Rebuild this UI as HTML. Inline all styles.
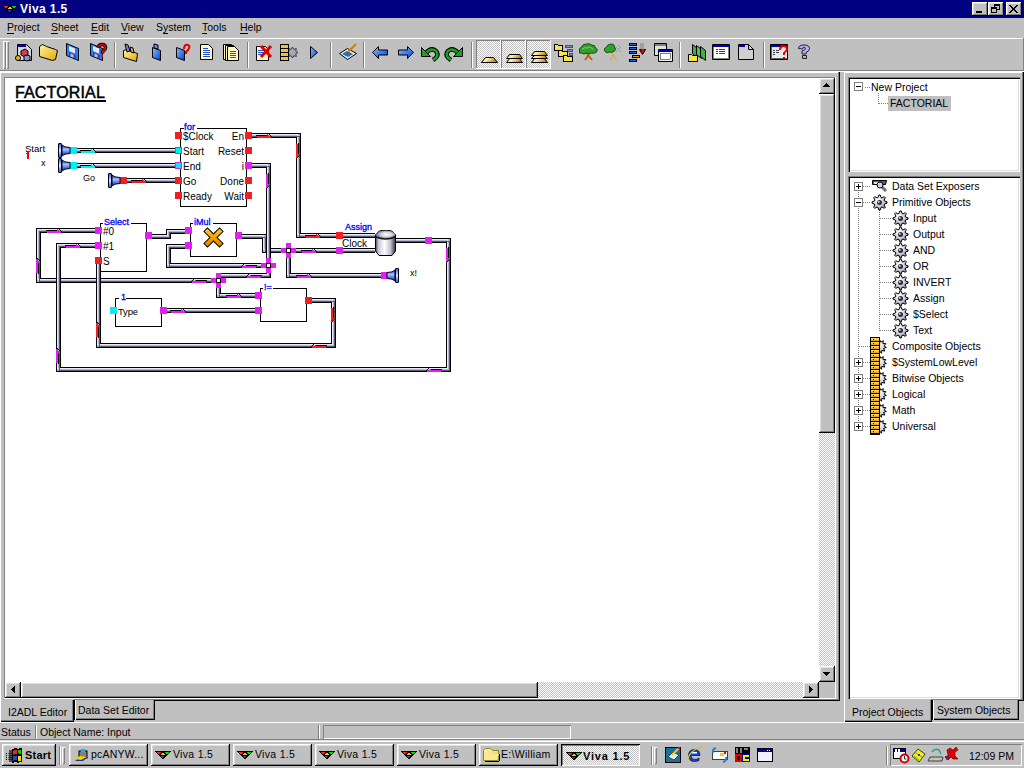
<!DOCTYPE html>
<html><head><meta charset="utf-8">
<style>
*{margin:0;padding:0;box-sizing:border-box}
html,body{width:1024px;height:768px;overflow:hidden;background:#c0c0c0;font-family:"Liberation Sans",sans-serif;font-size:10.5px;color:#000}
.a{position:absolute}
.t{position:absolute;white-space:pre;line-height:1}
.btn{position:absolute;background:#c0c0c0;box-shadow:inset -1px -1px #000,inset 1px 1px #fff,inset -2px -2px #808080,inset 2px 2px #dfdfdf}
.sunk{position:absolute;box-shadow:inset 1px 1px #808080,inset -1px -1px #fff}
.dith{background-color:#fff;background-image:linear-gradient(45deg,#c0c0c0 25%,transparent 25%,transparent 75%,#c0c0c0 75%),linear-gradient(45deg,#c0c0c0 25%,transparent 25%,transparent 75%,#c0c0c0 75%);background-size:2px 2px;background-position:0 0,1px 1px}
u{text-decoration:none;border-bottom:1px solid #000}
</style></head><body>

<!-- TITLE BAR -->
<div class="a" style="left:0;top:0;width:1024px;height:18px;background:#000080"></div>
<svg class="a" style="left:0;top:0" width="20" height="16" shape-rendering="crispEdges">
<path d="M2 5h16v1h-1v1h-1v1h-1v1h-1v1h-1v1h-1v1h-1v1h-2v-1h-1v-1h-1v-1h-1v-1h-1v-1h-1v-1h-1v-1h-1z" fill="#000"/>
<path d="M4 6h4v1h-1v1h-2v-1h-1z" fill="#ff2020"/>
<path d="M12 6h4v1h-1v1h-2v-1h-1z" fill="#00e000"/>
<path d="M9 7h2v1h1v1h-4v-1h1z" fill="#f8c800"/>
<path d="M8 10h3v1h-1v1h-1v-1h-1z" fill="#2040ff"/>
</svg>
<div class="t" style="left:20px;top:3px;font-size:12px;font-weight:bold;color:#fff;letter-spacing:0.4px">Viva 1.5</div>
<div class="btn" style="left:972px;top:2px;width:16px;height:14px"></div>
<div class="a" style="left:976px;top:11px;width:6px;height:2px;background:#000"></div>
<div class="btn" style="left:988px;top:2px;width:16px;height:14px"></div>
<svg class="a" style="left:991px;top:4px" width="9" height="9" shape-rendering="crispEdges">
<rect x="3" y="0" width="6" height="2" fill="#000"/><rect x="8" y="0" width="1" height="6" fill="#000"/><rect x="3" y="0" width="1" height="3" fill="#000"/><rect x="6" y="5" width="3" height="1" fill="#000"/>
<rect x="0" y="3" width="6" height="2" fill="#000"/><rect x="0" y="3" width="1" height="6" fill="#000"/><rect x="5" y="3" width="1" height="6" fill="#000"/><rect x="0" y="8" width="6" height="1" fill="#000"/>
</svg>
<div class="btn" style="left:1006px;top:2px;width:16px;height:14px"></div>
<svg class="a" style="left:1009px;top:5px" width="9" height="8" shape-rendering="crispEdges">
<path d="M0 0h2v1h-2zM7 0h2v1h-2z M1 1h2v1h-2z M6 1h2v1h-2z M2 2h2v1h-2z M5 2h2v1h-2z M3 3h3v1h-3z M3 4h3v1h-3z M2 5h2v1h-2z M5 5h2v1h-2z M1 6h2v1h-2z M6 6h2v1h-2z M0 7h2v1h-2z M7 7h2v1h-2z" fill="#000"/>
</svg>

<!-- MENU -->
<div class="t" style="left:7px;top:22px"><u>P</u>roject</div>
<div class="t" style="left:51px;top:22px"><u>S</u>heet</div>
<div class="t" style="left:91px;top:22px"><u>E</u>dit</div>
<div class="t" style="left:121px;top:22px"><u>V</u>iew</div>
<div class="t" style="left:156px;top:22px">S<u>y</u>stem</div>
<div class="t" style="left:202px;top:22px"><u>T</u>ools</div>
<div class="t" style="left:240px;top:22px"><u>H</u>elp</div>

<!-- TOOLBAR frame -->
<div class="a" style="left:0;top:38px;width:1024px;height:1px;background:#fff"></div>
<div class="a" style="left:1023px;top:38px;width:1px;height:32px;background:#808080"></div>
<div class="a" style="left:0;top:70px;width:1024px;height:1px;background:#808080"></div>
<div class="a" style="left:0;top:71px;width:1024px;height:1px;background:#fff"></div>
<div class="a" style="left:3px;top:41px;width:3px;height:28px;box-shadow:inset 1px 1px #fff,inset -1px -1px #808080"></div>
<div class="a" style="left:6px;top:41px;width:3px;height:28px;box-shadow:inset 1px 1px #fff,inset -1px -1px #808080"></div>
<svg class="a" style="left:0;top:38px" width="830" height="33" viewBox="0 38 830 33">
<defs>
<pattern id="dp" width="2" height="2" patternUnits="userSpaceOnUse"><rect width="2" height="2" fill="#fff"/><rect width="1" height="1" fill="#c0c0c0"/><rect x="1" y="1" width="1" height="1" fill="#c0c0c0"/></pattern>
<linearGradient id="gy" x1="0" y1="0" x2="1" y2="1"><stop offset="0" stop-color="#fff6a0"/><stop offset="1" stop-color="#e0a800"/></linearGradient>
<linearGradient id="gb" x1="0" y1="0" x2="1" y2="1"><stop offset="0" stop-color="#8ec0ff"/><stop offset="1" stop-color="#0040d0"/></linearGradient>
<linearGradient id="gg" x1="0" y1="0" x2="1" y2="1"><stop offset="0" stop-color="#60e060"/><stop offset="1" stop-color="#007000"/></linearGradient>
</defs>
<g shape-rendering="crispEdges">
<!-- separators -->
<rect x="114" y="42" width="1" height="26" fill="#808080"/><rect x="115" y="42" width="1" height="26" fill="#fff"/>
<rect x="247" y="42" width="1" height="26" fill="#808080"/><rect x="248" y="42" width="1" height="26" fill="#fff"/>
<rect x="330" y="42" width="1" height="26" fill="#808080"/><rect x="331" y="42" width="1" height="26" fill="#fff"/>
<rect x="363" y="42" width="1" height="26" fill="#808080"/><rect x="364" y="42" width="1" height="26" fill="#fff"/>
<rect x="471" y="42" width="1" height="26" fill="#808080"/><rect x="472" y="42" width="1" height="26" fill="#fff"/>
<rect x="679" y="42" width="1" height="26" fill="#808080"/><rect x="680" y="42" width="1" height="26" fill="#fff"/>
<rect x="763" y="42" width="1" height="26" fill="#808080"/><rect x="764" y="42" width="1" height="26" fill="#fff"/>
<!-- pressed buttons -->
<rect x="476" y="40" width="24" height="28" fill="url(#dp)"/><rect x="476" y="40" width="24" height="1" fill="#808080"/><rect x="476" y="40" width="1" height="28" fill="#808080"/><rect x="476" y="68" width="24" height="1" fill="#fff"/><rect x="500" y="40" width="1" height="29" fill="#fff"/>
<rect x="501" y="40" width="24" height="28" fill="url(#dp)"/><rect x="501" y="40" width="24" height="1" fill="#808080"/><rect x="501" y="40" width="1" height="28" fill="#808080"/><rect x="501" y="68" width="24" height="1" fill="#fff"/><rect x="525" y="40" width="1" height="29" fill="#fff"/>
<rect x="526" y="40" width="24" height="28" fill="url(#dp)"/><rect x="526" y="40" width="24" height="1" fill="#808080"/><rect x="526" y="40" width="1" height="28" fill="#808080"/><rect x="526" y="68" width="24" height="1" fill="#fff"/><rect x="550" y="40" width="1" height="29" fill="#fff"/>
</g>
<g stroke="#000" stroke-width="1" stroke-linejoin="round">
<!-- 1 new project -->
<path d="M17.5 44.5h9l5 5v11h-14z" fill="#d8d8d8"/><rect x="18" y="45" width="8" height="2" fill="#0000c0" stroke="none"/>
<path d="M21 51l4-2 3 2v4l-3 2-4-2z" fill="#d04050"/>
<circle cx="18" cy="58" r="2.5" fill="#f0c000"/><path d="M24 56l3-1 3 1v4l-3 1-3-1z" fill="#9090e0"/>
<!-- 2 folder -->
<path d="M39.5 46.5l3-2 4 2 9 3 2 1-2 9-3 1-13-4z" fill="url(#gy)"/>
<!-- 3 floppy -->
<path d="M66.5 43.5l12 5v12l-12-5z" fill="#2080ff" stroke="#000"/><path d="M69 46l6 2.5v5l-6-2.5z" fill="#e8e8f0" stroke="none"/><path d="M69 52l7 3v4l-7-3z" fill="#4040b0" stroke="none"/><path d="M70.5 53.5l3 1.2v3l-3-1.2z" fill="#c0c0d0" stroke="none"/>
<!-- 4 floppy ? -->
<path d="M90.5 43.5l12 5v12l-12-5z" fill="#2080ff" stroke="#000"/><path d="M93 46l6 2.5v5l-6-2.5z" fill="#e8e8f0" stroke="none"/><path d="M93 52l7 3v4l-7-3z" fill="#4040b0" stroke="none"/><path d="M94.5 53.5l3 1.2v3l-3-1.2z" fill="#c0c0d0" stroke="none"/><path d="M98.5 47.5q0-3 3.5-3q3.5 0 3.5 3q0 2-3 4v2" fill="none" stroke="#000" stroke-width="3.5"/><path d="M98.5 47.5q0-3 3.5-3q3.5 0 3.5 3q0 2-3 4v2" fill="none" stroke="#f00000" stroke-width="1.6"/><rect x="101" y="55" width="2" height="2" fill="#f00000" stroke="none"/>
<!-- 5 open folder -->
<path d="M123.5 50.5l3-1 11 4-1 8-13-4z" fill="url(#gy)"/><path d="M125 44l3 1 2 6-3 1z" fill="#8080e0"/><path d="M130 47l3 1 1 5-3-1z" fill="#d0b080"/>
<!-- 6 small floppy -->
<path d="M152.5 47.5l8 3v10l-8-3z" fill="url(#gb)"/><path d="M154 44l4 1v4l-4-1z" fill="#8080e0"/>
<!-- 7 small floppy ? -->
<path d="M176.5 47.5l8 3v10l-8-3z" fill="url(#gb)"/><path d="M184 49q0-5 4-4q3 1 0 5l-2 2v2" fill="none" stroke="#e00000" stroke-width="2"/>
<!-- 8 doc -->
<path d="M200.5 44.5h8l4 4v11h-12z" fill="#fff8c0"/><g stroke="#2050d0" stroke-width="1" shape-rendering="crispEdges"><path d="M203 48h5M203 50h7M203 52h7M203 54h7M203 56h7"/></g>
<!-- 9 docs -->
<path d="M223.5 44.5h8l4 4v11h-12z" fill="#fff8c0"/><path d="M225.5 45.5h8l4 4v11h-12z" fill="#fff8c0"/><path d="M227.5 46.5h7l4 4v10h-11z" fill="#fff8c0"/><g stroke="#2050d0" stroke-width="1" shape-rendering="crispEdges"><path d="M230 51h6M230 53h6M230 55h6M230 57h6"/></g>
<!-- 10 doc + X -->
<path d="M256.5 46.5h9l3 3v11h-12z" fill="#fff8c0"/><g stroke="#2050d0" shape-rendering="crispEdges"><path d="M258 50h6M258 52h6M258 54h6"/></g>
<path d="M261 46l10 11M271 46l-10 11" stroke="#e00000" stroke-width="3"/>
<!-- 11 stack gear -->
<polygon points="298.0,52.5 295.7,53.8 296.4,56.4 293.8,55.7 292.5,58.0 291.2,55.7 288.6,56.4 289.3,53.8 287.0,52.5 289.3,51.2 288.6,48.6 291.2,49.3 292.5,47.0 293.8,49.3 296.4,48.6 295.7,51.2" fill="#a8a8b8" stroke="#404040"/>
<g shape-rendering="crispEdges"><rect x="280.5" y="44.5" width="8" height="16" fill="#f0c040" stroke="#000"/><path d="M281 48.5h7M281 52.5h7M281 56.5h7" stroke="#000"/></g>
<!-- 12 play -->
<path d="M310.5 46.5l7 6-7 6z" fill="url(#gb)"/>
<!-- 13 eraser -->
<path d="M339.5 53.5l8-5 9 5-9 6z" fill="#e8e8e8"/><path d="M342 54l5-3 6 3-5 3z" fill="#2070c0" stroke="none"/><path d="M348 52l8-8" stroke="#d08000" stroke-width="2"/>
<!-- 14 left arrow -->
<path d="M372.5 52.5l6-6v3.5h9v5h-9v3.5z" fill="url(#gb)"/>
<!-- 15 right arrow -->
<path d="M413.5 52.5l-6-6v3.5h-9v5h9v3.5z" fill="url(#gb)"/>
<!-- 16 undo -->
<path d="M425.5 53.5Q431 47 436 51Q440 56 433 60" fill="none" stroke="#000" stroke-width="4.5"/>
<path d="M425.5 53.5Q431 47 436 51Q440 56 433 60" fill="none" stroke="#20a020" stroke-width="2.5"/>
<path d="M421.5 47.5v9h9z" fill="#20a020" stroke="#000"/>
<!-- 17 redo -->
<path d="M458.5 53.5Q453 47 448 51Q444 56 451 60" fill="none" stroke="#000" stroke-width="4.5"/>
<path d="M458.5 53.5Q453 47 448 51Q444 56 451 60" fill="none" stroke="#20a020" stroke-width="2.5"/>
<path d="M462.5 47.5v9h-9z" fill="#20a020" stroke="#000"/>
<!-- 18-20 layers -->
<defs><linearGradient id="lay" x1="0" y1="0" x2="1" y2="0.3"><stop offset="0" stop-color="#d8a020"/><stop offset="0.4" stop-color="#fff0c0"/><stop offset="1" stop-color="#c08000"/></linearGradient></defs>
<path d="M485.5 57.5h8l4 5h-16z" fill="url(#lay)" stroke="#000"/><path d="M509.5 58.5h10l3 4h-16z" fill="url(#lay)" stroke="#000"/><path d="M509.5 54.5h10l3 4h-16z" fill="url(#lay)" stroke="#000"/><path d="M534.5 58.5h10l3 4h-16z" fill="url(#lay)" stroke="#000"/><path d="M534.5 55.5h10l3 3h-16z" fill="url(#lay)" stroke="#000"/><path d="M534.5 51.5h10l3 4h-16z" fill="url(#lay)" stroke="#000"/>
<!-- 21 folder tree -->
<g shape-rendering="crispEdges">
<path d="M565.5 45.5h7v2h-7zM567.5 49.5h5v2h-5zM569.5 53.5h3v2h-3z" fill="#8090c0" stroke="#405080"/>
<path d="M554.5 44.5h3l1 1h4v5h-8z" fill="#f8e050" stroke="#000"/>
<path d="M558.5 50.5h3l1 1h5v5h-9z" fill="#f8e050" stroke="#000"/>
<path d="M563.5 55.5h3l1 1h5v5h-9z" fill="#f8e050" stroke="#000"/>
</g>
<!-- 22 tree -->
<path d="M587 52l1 4-3 4M588 55l4 5M586 52l-4-2M589 52l4-2" stroke="#c06000" stroke-width="2" fill="none" stroke-linejoin="miter"/>
<path d="M579.5 51q-1-3 2-4q1-3 5-3q3-1 5 1q4 0 4 3q3 1 1 4q-2 2-5 1q-2 2-5 0q-3 2-5 0q-3 1-2-2z" fill="#30a030" stroke="#105010"/>
<path d="M582 49q3-2 6-1M588 47q3 0 5 2" stroke="#80d060" stroke-width="1" fill="none"/>
<!-- 23 faded tree -->
<path d="M612 52l1 4-3 4M613 55l4 5M611 52l-4-2" stroke="#e0a040" stroke-width="2" fill="none" stroke-dasharray="1 1"/>
<path d="M604.5 51q-1-3 2-4q1-3 5-3q3 0 3 3q2 2 0 4q-2 2-5 1q-3 2-5-1z" fill="#30a030" stroke="#105010"/>
<path d="M616 47l5 5M621 47l-5 5M618 45l2 2" stroke="#50b050" stroke-width="1" stroke-dasharray="1 1" fill="none"/>
<!-- 24 list arrow -->
<g stroke="#000" shape-rendering="crispEdges"><rect x="629.5" y="43.5" width="7" height="2" fill="#2060e0" stroke="#000"/><rect x="629.5" y="47.5" width="7" height="2" fill="#2060e0" stroke="#000"/><rect x="629.5" y="51.5" width="7" height="2" fill="#2060e0" stroke="#000"/><rect x="632.5" y="55.5" width="7" height="2" fill="#e0a000" stroke="#000"/><rect x="629.5" y="59.5" width="7" height="2" fill="#2060e0" stroke="#000"/></g>
<rect x="640" y="43" width="4" height="6" fill="#a0a0a0" stroke="none"/><path d="M639.5 49.5h6l-3 5z" fill="#e00000" stroke="#000"/><rect x="641" y="49" width="3" height="2" fill="#e00000" stroke="none"/>
<!-- 25 windows -->
<rect x="654.5" y="43.5" width="12" height="12" fill="#e0e0e0" stroke="#000"/><rect x="655" y="44" width="11" height="2" fill="#808080" stroke="none"/>
<rect x="658.5" y="49.5" width="14" height="12" fill="#f0f0f0" stroke="#000"/><rect x="659" y="50" width="13" height="2" fill="#0000c0" stroke="none"/><rect x="660" y="53" width="10" height="6" fill="#fff" stroke="#808080" shape-rendering="crispEdges"/>
<!-- 26 green folders -->
<path d="M692.5 44.5l5 4v9l-5-4z" fill="#40b040" stroke="#000"/><path d="M696.5 45.5l5 4v9l-5-4z" fill="#50c050" stroke="#000"/><path d="M700.5 46.5l5 4v10l-5-4z" fill="#40b040" stroke="#000"/>
<path d="M688.5 54.5h3l1 1h5v6h-9z" fill="#f8e050" stroke="#000"/>
<!-- 27 window list -->
<rect x="712.5" y="44.5" width="17" height="15" fill="#fff" stroke="#000"/><rect x="713" y="45" width="16" height="2" fill="#0000c0" stroke="none"/><rect x="713" y="47" width="1" height="12" fill="#808080" stroke="none"/><rect x="728" y="47" width="1" height="12" fill="#808080" stroke="none"/><rect x="713" y="58" width="16" height="1" fill="#808080" stroke="none"/>
<g shape-rendering="crispEdges" fill="#404040" stroke="none"><rect x="716" y="49" width="2" height="1" stroke="none"/><rect x="716" y="51" width="2" height="1" stroke="none"/><rect x="716" y="53" width="2" height="1" stroke="none"/><rect x="719" y="49" width="6" height="1" stroke="none"/><rect x="719" y="51" width="6" height="1" stroke="none"/><rect x="719" y="53" width="6" height="1" stroke="none"/></g>
<!-- 28 page -->
<path d="M738.5 44.5h10l5 5v10h-15z" fill="#d0d0d0" stroke="#000"/><rect x="739" y="45" width="6" height="2" fill="#0000c0" stroke="none"/><path d="M748.5 44.5v5h5" fill="none" stroke="#000"/>
<!-- 29 window ? -->
<rect x="770.5" y="44.5" width="17" height="15" fill="#e8e8e8" stroke="#000"/><rect x="771" y="45" width="16" height="2" fill="#0000c0" stroke="none"/><rect x="771" y="47" width="1" height="12" fill="#606060" stroke="none"/><rect x="771" y="58" width="16" height="1" fill="#606060" stroke="none"/>
<g shape-rendering="crispEdges" fill="#404040" stroke="none"><rect x="773" y="50" width="2" height="1" stroke="none"/><rect x="773" y="52" width="2" height="1" stroke="none"/><rect x="773" y="54" width="2" height="1" stroke="none"/><rect x="776" y="50" width="3" height="1" stroke="none"/><rect x="776" y="52" width="3" height="1" stroke="none"/></g>
<path d="M780 50q0-4 3.5-4q3.5 0 3.5 3q0 2-3 4v2" fill="none" stroke="#e00000" stroke-width="2"/><rect x="783" y="57" width="2" height="2" fill="#e00000" stroke="none"/>
<!-- 30 ? purple -->
<path d="M798.5 48.5q0-3.5 5.5-3.5q5.5 0 5.5 3.5q0 2.5-3.5 4v1.5h-4v-3q3.5-1 3.5-2.5q0-1-1.5-1q-1.5 0-1.5 1.5z" fill="#c0a8ff" stroke="#202020"/><rect x="802.5" y="55.5" width="4" height="3" fill="#c0a8ff" stroke="#202020"/>
</g>
</svg>


<!-- CANVAS PANEL -->
<div class="a" style="left:0;top:72px;width:839px;height:1px;background:#fff"></div>
<div class="a" style="left:4px;top:77px;width:832px;height:1px;background:#808080"></div>
<div class="a" style="left:4px;top:77px;width:1px;height:622px;background:#808080"></div>
<div class="a" style="left:5px;top:78px;width:814px;height:604px;background:#fff"></div>
<!--SCHEM--><svg class="a" style="left:5px;top:78px" width="815" height="604" viewBox="5 78 815 604"><g fill="none" stroke-linejoin="miter" stroke-linecap="butt" shape-rendering="crispEdges"><path d="M77,150.5 L175,150.5" stroke="#000" stroke-width="5"/><path d="M77,150.5 L175,150.5" stroke="#b4b4d4" stroke-width="3"/><path d="M77,149.5 L175,149.5" stroke="#e8e8ff" stroke-width="1"/><path d="M77,151.5 L175,151.5" stroke="#5a5868" stroke-width="1"/><path d="M77,165.5 L175,165.5" stroke="#000" stroke-width="5"/><path d="M77,165.5 L175,165.5" stroke="#b4b4d4" stroke-width="3"/><path d="M77,164.5 L175,164.5" stroke="#e8e8ff" stroke-width="1"/><path d="M77,166.5 L175,166.5" stroke="#5a5868" stroke-width="1"/><path d="M127,180.5 L175,180.5" stroke="#000" stroke-width="5"/><path d="M127,180.5 L175,180.5" stroke="#b4b4d4" stroke-width="3"/><path d="M127,179.5 L175,179.5" stroke="#e8e8ff" stroke-width="1"/><path d="M127,181.5 L175,181.5" stroke="#5a5868" stroke-width="1"/><path d="M252,135.5 L298.5,135.5 L298.5,235.5 L375,235.5" stroke="#000" stroke-width="5"/><path d="M252,135.5 L298.5,135.5 L298.5,235.5 L375,235.5" stroke="#b4b4d4" stroke-width="3"/><path d="M252,134.5 L297.5,134.5 L297.5,234.5 L375,234.5" stroke="#e8e8ff" stroke-width="1"/><path d="M252,136.5 L299.5,136.5 L299.5,236.5 L375,236.5" stroke="#5a5868" stroke-width="1"/><path d="M241,236.5 L264.5,236.5 L264.5,250.5 L281,250.5" stroke="#000" stroke-width="5"/><path d="M241,236.5 L264.5,236.5 L264.5,250.5 L281,250.5" stroke="#b4b4d4" stroke-width="3"/><path d="M241,235.5 L263.5,235.5 L263.5,249.5 L281,249.5" stroke="#e8e8ff" stroke-width="1"/><path d="M241,237.5 L265.5,237.5 L265.5,251.5 L281,251.5" stroke="#5a5868" stroke-width="1"/><path d="M252,165.5 L268.5,165.5 L268.5,275.5 L221,275.5" stroke="#000" stroke-width="5"/><path d="M252,165.5 L268.5,165.5 L268.5,275.5 L221,275.5" stroke="#b4b4d4" stroke-width="3"/><path d="M252,164.5 L267.5,164.5 L267.5,274.5 L221,274.5" stroke="#e8e8ff" stroke-width="1"/><path d="M252,166.5 L269.5,166.5 L269.5,276.5 L221,276.5" stroke="#5a5868" stroke-width="1"/><path d="M152,236.5 L168.5,236.5 L168.5,231.5 L186,231.5" stroke="#000" stroke-width="5"/><path d="M152,236.5 L168.5,236.5 L168.5,231.5 L186,231.5" stroke="#b4b4d4" stroke-width="3"/><path d="M152,235.5 L167.5,235.5 L167.5,230.5 L186,230.5" stroke="#e8e8ff" stroke-width="1"/><path d="M152,237.5 L169.5,237.5 L169.5,232.5 L186,232.5" stroke="#5a5868" stroke-width="1"/><path d="M186,246.5 L168.5,246.5 L168.5,265.5 L261,265.5" stroke="#000" stroke-width="5"/><path d="M186,246.5 L168.5,246.5 L168.5,265.5 L261,265.5" stroke="#b4b4d4" stroke-width="3"/><path d="M186,245.5 L167.5,245.5 L167.5,264.5 L261,264.5" stroke="#e8e8ff" stroke-width="1"/><path d="M186,247.5 L169.5,247.5 L169.5,266.5 L261,266.5" stroke="#5a5868" stroke-width="1"/><path d="M95,230.5 L38.5,230.5 L38.5,280.5 L211,280.5" stroke="#000" stroke-width="5"/><path d="M95,230.5 L38.5,230.5 L38.5,280.5 L211,280.5" stroke="#b4b4d4" stroke-width="3"/><path d="M95,229.5 L37.5,229.5 L37.5,279.5 L211,279.5" stroke="#e8e8ff" stroke-width="1"/><path d="M95,231.5 L39.5,231.5 L39.5,281.5 L211,281.5" stroke="#5a5868" stroke-width="1"/><path d="M95,245.5 L58.5,245.5 L58.5,369.5 L448.5,369.5 L448.5,240.5 L395,240.5" stroke="#000" stroke-width="5"/><path d="M95,245.5 L58.5,245.5 L58.5,369.5 L448.5,369.5 L448.5,240.5 L395,240.5" stroke="#b4b4d4" stroke-width="3"/><path d="M95,244.5 L57.5,244.5 L57.5,368.5 L447.5,368.5 L447.5,239.5 L395,239.5" stroke="#e8e8ff" stroke-width="1"/><path d="M95,246.5 L59.5,246.5 L59.5,370.5 L449.5,370.5 L449.5,241.5 L395,241.5" stroke="#5a5868" stroke-width="1"/><path d="M98.5,264 L98.5,345.5 L333.5,345.5 L333.5,300.5 L311,300.5" stroke="#000" stroke-width="5"/><path d="M98.5,264 L98.5,345.5 L333.5,345.5 L333.5,300.5 L311,300.5" stroke="#b4b4d4" stroke-width="3"/><path d="M97.5,264 L97.5,344.5 L332.5,344.5 L332.5,299.5 L311,299.5" stroke="#e8e8ff" stroke-width="1"/><path d="M99.5,264 L99.5,346.5 L334.5,346.5 L334.5,301.5 L311,301.5" stroke="#5a5868" stroke-width="1"/><path d="M166,310.5 L255,310.5" stroke="#000" stroke-width="5"/><path d="M166,310.5 L255,310.5" stroke="#b4b4d4" stroke-width="3"/><path d="M166,309.5 L255,309.5" stroke="#e8e8ff" stroke-width="1"/><path d="M166,311.5 L255,311.5" stroke="#5a5868" stroke-width="1"/><path d="M218.5,288 L218.5,295.5 L255,295.5" stroke="#000" stroke-width="5"/><path d="M218.5,288 L218.5,295.5 L255,295.5" stroke="#b4b4d4" stroke-width="3"/><path d="M217.5,288 L217.5,294.5 L255,294.5" stroke="#e8e8ff" stroke-width="1"/><path d="M219.5,288 L219.5,296.5 L255,296.5" stroke="#5a5868" stroke-width="1"/><path d="M296,250.5 L375,250.5" stroke="#000" stroke-width="5"/><path d="M296,250.5 L375,250.5" stroke="#b4b4d4" stroke-width="3"/><path d="M296,249.5 L375,249.5" stroke="#e8e8ff" stroke-width="1"/><path d="M296,251.5 L375,251.5" stroke="#5a5868" stroke-width="1"/><path d="M288.5,258 L288.5,275.5 L381,275.5" stroke="#000" stroke-width="5"/><path d="M288.5,258 L288.5,275.5 L381,275.5" stroke="#b4b4d4" stroke-width="3"/><path d="M287.5,258 L287.5,274.5 L381,274.5" stroke="#e8e8ff" stroke-width="1"/><path d="M289.5,258 L289.5,276.5 L381,276.5" stroke="#5a5868" stroke-width="1"/></g><g shape-rendering="crispEdges"><rect x="80" y="150" width="11" height="1" fill="#000"/><rect x="81" y="151" width="14" height="2" fill="#00f0f0"/><polygon points="91,149 95,153 91,153" fill="#00f0f0"/><path d="M92,148 L96,152" stroke="#000" stroke-width="1" fill="none"/><rect x="80" y="165" width="11" height="1" fill="#000"/><rect x="81" y="166" width="14" height="2" fill="#00f0f0"/><polygon points="91,164 95,168 91,168" fill="#00f0f0"/><path d="M92,163 L96,167" stroke="#000" stroke-width="1" fill="none"/><rect x="131" y="180" width="11" height="1" fill="#000"/><rect x="132" y="181" width="14" height="2" fill="#f02020"/><polygon points="142,179 146,183 142,183" fill="#f02020"/><path d="M143,178 L147,182" stroke="#000" stroke-width="1" fill="none"/><rect x="256" y="135" width="11" height="1" fill="#000"/><rect x="257" y="136" width="14" height="2" fill="#f02020"/><polygon points="267,134 271,138 267,138" fill="#f02020"/><path d="M268,133 L272,137" stroke="#000" stroke-width="1" fill="none"/><rect x="46" y="230" width="11" height="1" fill="#000"/><rect x="47" y="231" width="14" height="2" fill="#e020f0"/><polygon points="57,229 61,233 57,233" fill="#e020f0"/><path d="M58,228 L62,232" stroke="#000" stroke-width="1" fill="none"/><rect x="65" y="245" width="11" height="1" fill="#000"/><rect x="66" y="246" width="14" height="2" fill="#e020f0"/><polygon points="76,244 80,248 76,248" fill="#e020f0"/><path d="M77,243 L81,247" stroke="#000" stroke-width="1" fill="none"/><rect x="246" y="265" width="11" height="1" fill="#000"/><rect x="242" y="266" width="14" height="2" fill="#e020f0"/><polygon points="246,264 242,268 246,268" fill="#e020f0"/><path d="M245,263 L241,267" stroke="#000" stroke-width="1" fill="none"/><rect x="196" y="280" width="11" height="1" fill="#000"/><rect x="192" y="281" width="14" height="2" fill="#e020f0"/><polygon points="196,279 192,283 196,283" fill="#e020f0"/><path d="M195,278 L191,282" stroke="#000" stroke-width="1" fill="none"/><rect x="251" y="275" width="11" height="1" fill="#000"/><rect x="247" y="276" width="14" height="2" fill="#e020f0"/><polygon points="251,274 247,278 251,278" fill="#e020f0"/><path d="M250,273 L246,277" stroke="#000" stroke-width="1" fill="none"/><rect x="226" y="295" width="11" height="1" fill="#000"/><rect x="227" y="296" width="14" height="2" fill="#e020f0"/><polygon points="237,294 241,298 237,298" fill="#e020f0"/><path d="M238,293 L242,297" stroke="#000" stroke-width="1" fill="none"/><rect x="170" y="310" width="11" height="1" fill="#000"/><rect x="171" y="311" width="14" height="2" fill="#e020f0"/><polygon points="181,309 185,313 181,313" fill="#e020f0"/><path d="M182,308 L186,312" stroke="#000" stroke-width="1" fill="none"/><rect x="316" y="345" width="11" height="1" fill="#000"/><rect x="312" y="346" width="14" height="2" fill="#f02020"/><polygon points="316,344 312,348 316,348" fill="#f02020"/><path d="M315,343 L311,347" stroke="#000" stroke-width="1" fill="none"/><rect x="301" y="250" width="11" height="1" fill="#000"/><rect x="302" y="251" width="14" height="2" fill="#e020f0"/><polygon points="312,249 316,253 312,253" fill="#e020f0"/><path d="M313,248 L317,252" stroke="#000" stroke-width="1" fill="none"/><rect x="305" y="235" width="11" height="1" fill="#000"/><rect x="306" y="236" width="14" height="2" fill="#f02020"/><polygon points="316,234 320,238 316,238" fill="#f02020"/><path d="M317,233 L321,237" stroke="#000" stroke-width="1" fill="none"/><rect x="296" y="275" width="11" height="1" fill="#000"/><rect x="297" y="276" width="14" height="2" fill="#e020f0"/><polygon points="307,274 311,278 307,278" fill="#e020f0"/><path d="M308,273 L312,277" stroke="#000" stroke-width="1" fill="none"/><rect x="431" y="369" width="11" height="1" fill="#000"/><rect x="427" y="370" width="14" height="2" fill="#e020f0"/><polygon points="431,368 427,372 431,372" fill="#e020f0"/><path d="M430,367 L426,371" stroke="#000" stroke-width="1" fill="none"/><rect x="298" y="143" width="1" height="11" fill="#000"/><rect x="296" y="144" width="2" height="14" fill="#f02020"/><polygon points="296,154 300,154 296,158" fill="#f02020"/><path d="M296,159 L300,155" stroke="#000" stroke-width="1" fill="none"/><rect x="268" y="173" width="1" height="11" fill="#000"/><rect x="266" y="174" width="2" height="14" fill="#e020f0"/><polygon points="266,184 270,184 266,188" fill="#e020f0"/><path d="M266,189 L270,185" stroke="#000" stroke-width="1" fill="none"/><rect x="38" y="263" width="1" height="11" fill="#000"/><rect x="36" y="259" width="2" height="14" fill="#e020f0"/><polygon points="36,259 40,263 36,263" fill="#e020f0"/><path d="M37,258 L41,262" stroke="#000" stroke-width="1" fill="none"/><rect x="58" y="353" width="1" height="11" fill="#000"/><rect x="56" y="349" width="2" height="14" fill="#e020f0"/><polygon points="56,349 60,353 56,353" fill="#e020f0"/><path d="M57,348 L61,352" stroke="#000" stroke-width="1" fill="none"/><rect x="98" y="327" width="1" height="11" fill="#000"/><rect x="96" y="323" width="2" height="14" fill="#f02020"/><polygon points="96,323 100,327 96,327" fill="#f02020"/><path d="M97,322 L101,326" stroke="#000" stroke-width="1" fill="none"/><rect x="333" y="307" width="1" height="11" fill="#000"/><rect x="331" y="308" width="2" height="14" fill="#f02020"/><polygon points="331,318 335,318 331,322" fill="#f02020"/><path d="M331,323 L335,319" stroke="#000" stroke-width="1" fill="none"/><rect x="448" y="247" width="1" height="11" fill="#000"/><rect x="446" y="248" width="2" height="14" fill="#e020f0"/><polygon points="446,258 450,258 446,262" fill="#e020f0"/><path d="M446,263 L450,259" stroke="#000" stroke-width="1" fill="none"/></g><g shape-rendering="crispEdges" fill="#000"><rect x="180" y="128" width="1" height="79" fill="#000"/><rect x="246" y="128" width="1" height="79" fill="#000"/><rect x="180" y="206" width="67" height="1" fill="#000"/><rect x="180" y="128" width="4" height="1" fill="#000"/><rect x="197" y="128" width="50" height="1" fill="#000"/></g><g shape-rendering="crispEdges" fill="#000"><rect x="100" y="223" width="1" height="49" fill="#000"/><rect x="146" y="223" width="1" height="49" fill="#000"/><rect x="100" y="271" width="47" height="1" fill="#000"/><rect x="100" y="223" width="3" height="1" fill="#000"/><rect x="131" y="223" width="16" height="1" fill="#000"/></g><g shape-rendering="crispEdges" fill="#000"><rect x="190" y="223" width="1" height="34" fill="#000"/><rect x="236" y="223" width="1" height="34" fill="#000"/><rect x="190" y="256" width="47" height="1" fill="#000"/><rect x="190" y="223" width="3" height="1" fill="#000"/><rect x="213" y="223" width="24" height="1" fill="#000"/></g><g shape-rendering="crispEdges" fill="#000"><rect x="115" y="298" width="1" height="29" fill="#000"/><rect x="161" y="298" width="1" height="29" fill="#000"/><rect x="115" y="326" width="47" height="1" fill="#000"/><rect x="115" y="298" width="4" height="1" fill="#000"/><rect x="126" y="298" width="36" height="1" fill="#000"/></g><g shape-rendering="crispEdges" fill="#000"><rect x="260" y="288" width="1" height="34" fill="#000"/><rect x="306" y="288" width="1" height="34" fill="#000"/><rect x="260" y="321" width="47" height="1" fill="#000"/><rect x="260" y="288" width="3" height="1" fill="#000"/><rect x="273" y="288" width="34" height="1" fill="#000"/></g><g shape-rendering="crispEdges"><rect x="175" y="132" width="7" height="7" fill="#f02020"/><rect x="175" y="147" width="7" height="7" fill="#00f0f0"/><rect x="175.5" y="147.5" width="6" height="6" fill="none" stroke="#e020f0" stroke-width="1"/><rect x="175" y="162" width="7" height="7" fill="#00f0f0"/><rect x="175.5" y="162.5" width="6" height="6" fill="none" stroke="#e020f0" stroke-width="1"/><rect x="175" y="177" width="7" height="7" fill="#f02020"/><rect x="175" y="192" width="7" height="7" fill="#f02020"/><rect x="245" y="132" width="7" height="7" fill="#f02020"/><rect x="245" y="147" width="7" height="7" fill="#f02020"/><rect x="245" y="162" width="7" height="7" fill="#e020f0"/><rect x="245" y="177" width="7" height="7" fill="#f02020"/><rect x="245" y="192" width="7" height="7" fill="#f02020"/><rect x="95" y="227" width="7" height="7" fill="#e020f0"/><rect x="95" y="242" width="7" height="7" fill="#e020f0"/><rect x="95" y="257" width="7" height="7" fill="#f02020"/><rect x="145" y="232" width="7" height="7" fill="#e020f0"/><rect x="185" y="227" width="7" height="7" fill="#e020f0"/><rect x="185" y="242" width="7" height="7" fill="#e020f0"/><rect x="235" y="232" width="7" height="7" fill="#e020f0"/><rect x="110" y="307" width="7" height="7" fill="#00f0f0"/><rect x="160" y="307" width="7" height="7" fill="#e020f0"/><rect x="255" y="292" width="7" height="7" fill="#e020f0"/><rect x="255" y="307" width="7" height="7" fill="#e020f0"/><rect x="305" y="297" width="7" height="7" fill="#f02020"/><rect x="336" y="247" width="7" height="7" fill="#e020f0"/><rect x="336" y="232" width="7" height="7" fill="#f02020"/><rect x="425" y="237" width="7" height="7" fill="#e020f0"/><rect x="70" y="147" width="7" height="7" fill="#00f0f0"/><rect x="70" y="162" width="7" height="7" fill="#00f0f0"/><rect x="120" y="177" width="7" height="7" fill="#f02020"/><rect x="381" y="272" width="7" height="7" fill="#e020f0"/><rect x="286" y="243" width="5" height="5" fill="#e020f0"/><rect x="286" y="253" width="5" height="5" fill="#e020f0"/><rect x="281" y="248" width="5" height="5" fill="#e020f0"/><rect x="291" y="248" width="5" height="5" fill="#e020f0"/><rect x="286.5" y="248.5" width="4" height="4" fill="#fff" stroke="#000" stroke-width="1"/><rect x="266" y="258" width="5" height="5" fill="#e020f0"/><rect x="266" y="268" width="5" height="5" fill="#e020f0"/><rect x="261" y="263" width="5" height="5" fill="#e020f0"/><rect x="271" y="263" width="5" height="5" fill="#e020f0"/><rect x="266.5" y="263.5" width="4" height="4" fill="#fff" stroke="#000" stroke-width="1"/><rect x="216" y="273" width="5" height="5" fill="#e020f0"/><rect x="216" y="283" width="5" height="5" fill="#e020f0"/><rect x="211" y="278" width="5" height="5" fill="#e020f0"/><rect x="221" y="278" width="5" height="5" fill="#e020f0"/><rect x="216.5" y="278.5" width="4" height="4" fill="#fff" stroke="#000" stroke-width="1"/></g><defs><linearGradient id="cb" x1="0" y1="0" x2="0" y2="1"><stop offset="0" stop-color="#2050ff"/><stop offset="0.5" stop-color="#e0e8ff"/><stop offset="1" stop-color="#2050ff"/></linearGradient><linearGradient id="ch" x1="0" y1="0" x2="0" y2="1"><stop offset="0" stop-color="#0030ff"/><stop offset="0.4" stop-color="#a8c0ff"/><stop offset="1" stop-color="#0020d0"/></linearGradient><linearGradient id="ch2" x1="0" y1="0" x2="0" y2="1"><stop offset="0" stop-color="#0030ff"/><stop offset="0.4" stop-color="#a8c0ff"/><stop offset="1" stop-color="#0020d0"/></linearGradient><radialGradient id="cyl" cx="0.5" cy="0.6" r="0.6"><stop offset="0" stop-color="#ffffff"/><stop offset="0.6" stop-color="#c8c8dc"/><stop offset="1" stop-color="#404050"/></radialGradient><linearGradient id="xg" x1="0" y1="0" x2="1" y2="1"><stop offset="0" stop-color="#ffe090"/><stop offset="0.5" stop-color="#f0a000"/><stop offset="1" stop-color="#d07000"/></linearGradient></defs><rect x="58.5" y="143.5" width="3" height="14" rx="0.5" fill="url(#cb)" stroke="#000"/><path d="M62,145 Q64,147.5 70,147.5 L70,153.5 Q64,153.5 62,156 Z" fill="url(#ch)" stroke="#000" stroke-width="1"/><rect x="58.5" y="158.5" width="3" height="14" rx="0.5" fill="url(#cb)" stroke="#000"/><path d="M62,160 Q64,162.5 70,162.5 L70,168.5 Q64,168.5 62,171 Z" fill="url(#ch)" stroke="#000" stroke-width="1"/><rect x="108.5" y="173.5" width="3" height="14" rx="0.5" fill="url(#cb)" stroke="#000"/><path d="M112,175 Q114,177.5 120,177.5 L120,183.5 Q114,183.5 112,186 Z" fill="url(#ch)" stroke="#000" stroke-width="1"/><rect x="395.5" y="268.5" width="3" height="14" rx="0.5" fill="url(#cb)" stroke="#000"/><path d="M395,270 Q393,272.5 387,272.5 L387,278.5 Q393,278.5 395,281 Z" fill="url(#ch2)" stroke="#000" stroke-width="1"/><defs><linearGradient id="cylb" x1="0" y1="0" x2="1" y2="0"><stop offset="0" stop-color="#404050"/><stop offset="0.15" stop-color="#c8c8d8"/><stop offset="0.45" stop-color="#ffffff"/><stop offset="0.75" stop-color="#c0c0d0"/><stop offset="1" stop-color="#303040"/></linearGradient><radialGradient id="cylt" cx="0.55" cy="0.5" r="0.6"><stop offset="0" stop-color="#ffffff"/><stop offset="0.5" stop-color="#d0d0e0"/><stop offset="1" stop-color="#505060"/></radialGradient></defs><path d="M375.5,235 L378.5,231.5 L381,230.5 L390,230.5 L392.5,231.5 L395.5,235 L395.5,251 L392,255.5 L379,255.5 L375.5,251 Z" fill="url(#cylb)" stroke="#000"/><ellipse cx="385.5" cy="234.5" rx="9.5" ry="4" fill="url(#cylt)"/><path d="M376,237 Q385.5,241 395,237" fill="none" stroke="#101010" stroke-width="1.5"/><g transform="translate(213.5,237.5) rotate(45)"><path d="M-2.5,-11 h5 v8.5 h8.5 v5 h-8.5 v8.5 h-5 v-8.5 h-8.5 v-5 h8.5 z" fill="url(#xg)" stroke="#000" stroke-width="1"/></g></svg>
<div class="t" style="left:15px;top:85px;font-size:16px;color:#000;letter-spacing:0.15px;-webkit-text-stroke:0.5px #000">FACTORIAL</div>
<div class="a" style="left:16px;top:100px;width:90px;height:2px;background:#000"></div>
<div class="t" style="left:25px;top:144px;font-size:9.5px;color:#000;">Start</div>
<svg class="a" style="left:26px;top:152px" width="4" height="7" shape-rendering="crispEdges"><rect x="1" y="0" width="2" height="7" fill="#f00000"/><rect x="0" y="1" width="1" height="1" fill="#f00000"/></svg>
<div class="t" style="left:41px;top:159px;font-size:9px;color:#000;">x</div>
<div class="t" style="left:83px;top:174px;font-size:9px;color:#000;">Go</div>
<div class="t" style="left:184px;top:122px;font-size:9.5px;color:#0000ff;-webkit-text-stroke:0.3px #0000ff">for</div>
<div class="t" style="left:104px;top:218px;font-size:9px;color:#0000ff;-webkit-text-stroke:0.3px #0000ff">Select</div>
<div class="t" style="left:194px;top:218px;font-size:9px;color:#0000ff;-webkit-text-stroke:0.3px #0000ff">iMul</div>
<div class="t" style="left:345px;top:223px;font-size:9px;color:#0000ff;-webkit-text-stroke:0.3px #0000ff">Assign</div>
<div class="t" style="left:121px;top:293px;font-size:9px;color:#0000ff;-webkit-text-stroke:0.3px #0000ff">1</div>
<div class="t" style="left:264px;top:283px;font-size:9px;color:#0000ff;-webkit-text-stroke:0.3px #0000ff">!=</div>
<div class="t" style="left:183px;top:132px;font-size:10px;color:#000;">$Clock</div>
<div class="t" style="left:183px;top:147px;font-size:10px;color:#000;">Start</div>
<div class="t" style="left:183px;top:162px;font-size:10px;color:#000;">End</div>
<div class="t" style="left:183px;top:177px;font-size:10px;color:#000;">Go</div>
<div class="t" style="left:183px;top:192px;font-size:10px;color:#000;">Ready</div>
<div class="t" style="left:184px;width:60px;text-align:right;top:132px;font-size:10px">En</div>
<div class="t" style="left:184px;width:60px;text-align:right;top:147px;font-size:10px">Reset</div>
<div class="t" style="left:184px;width:60px;text-align:right;top:162px;font-size:10px">i</div>
<div class="t" style="left:184px;width:60px;text-align:right;top:177px;font-size:10px">Done</div>
<div class="t" style="left:184px;width:60px;text-align:right;top:192px;font-size:10px">Wait</div>
<div class="t" style="left:103px;top:227px;font-size:10px;color:#000;">#0</div>
<div class="t" style="left:103px;top:242px;font-size:10px;color:#000;">#1</div>
<div class="t" style="left:103px;top:257px;font-size:10px;color:#000;">S</div>
<div class="t" style="left:342px;top:239px;font-size:10px;color:#000;">Clock</div>
<div class="t" style="left:118px;top:307px;font-size:9.5px;color:#000;letter-spacing:-0.2px">Type</div>
<div class="t" style="left:410px;top:269px;font-size:9px;color:#000;">x!</div><!--/SCHEM-->

<!-- canvas scrollbars -->
<div class="btn" style="left:819px;top:78px;width:16px;height:16px"></div>
<svg class="a" style="left:823px;top:83px" width="7" height="4" shape-rendering="crispEdges"><path d="M3 0h1v1h1v1h1v1h1v1h-7v-1h1v-1h1v-1h1z" fill="#000"/></svg>
<div class="btn" style="left:819px;top:94px;width:16px;height:339px"></div>
<div class="a dith" style="left:819px;top:433px;width:16px;height:233px"></div>
<div class="btn" style="left:819px;top:666px;width:16px;height:16px"></div>
<svg class="a" style="left:823px;top:672px" width="7" height="4" shape-rendering="crispEdges"><path d="M0 0h7v1h-1v1h-1v1h-1v1h-1v-1h-1v-1h-1v-1h-1z" fill="#000"/></svg>
<div class="btn" style="left:5px;top:682px;width:16px;height:16px"></div>
<svg class="a" style="left:11px;top:686px" width="4" height="7" shape-rendering="crispEdges"><path d="M3 0h1v7h-1v-1h-1v-1h-1v-1h-1v-1h1v-1h1v-1h1z" fill="#000"/></svg>
<div class="btn" style="left:21px;top:682px;width:517px;height:16px"></div>
<div class="a dith" style="left:538px;top:682px;width:265px;height:16px"></div>
<div class="btn" style="left:803px;top:682px;width:16px;height:16px"></div>
<svg class="a" style="left:809px;top:686px" width="4" height="7" shape-rendering="crispEdges"><path d="M0 0h1v1h1v1h1v1h1v1h-1v1h-1v1h-1v1h-1z" fill="#000"/></svg>
<div class="a" style="left:819px;top:682px;width:16px;height:16px;background:#c0c0c0"></div>
<!-- canvas frame right / bottom -->
<div class="a" style="left:835px;top:77px;width:1px;height:622px;background:#fff"></div>
<div class="a" style="left:4px;top:698px;width:832px;height:1px;background:#fff"></div>
<div class="a" style="left:838px;top:72px;width:1px;height:628px;background:#808080"></div>
<div class="a" style="left:839px;top:72px;width:1px;height:629px;background:#000"></div>
<div class="a" style="left:74px;top:699px;width:765px;height:1px;background:#808080"></div>
<div class="a" style="left:0;top:72px;width:1px;height:649px;background:#fff"></div>
<div class="a" style="left:74px;top:700px;width:766px;height:1px;background:#000"></div>
<!-- canvas tabs -->
<div class="a" style="left:0;top:700px;width:74px;height:22px;background:#c0c0c0;box-shadow:inset 1px 0 #fff,inset -1px -1px #000,inset -2px -2px #808080"></div>
<div class="t" style="left:8px;top:707px">I2ADL Editor</div>
<div class="a" style="left:74px;top:700px;width:81px;height:20px;background:#c0c0c0;box-shadow:inset 1px 0 #000,inset 2px 0 #fff,inset -1px -1px #000,inset -2px -2px #808080"></div>
<div class="t" style="left:78px;top:705px">Data Set Editor</div>

<!-- right panel -->
<div class="a" style="left:844px;top:72px;width:1px;height:649px;background:#fff"></div>
<div class="a" style="left:844px;top:72px;width:180px;height:1px;background:#fff"></div>
<!-- project tree -->
<div class="a" style="left:848px;top:77px;width:172px;height:95px;background:#fff;box-shadow:inset 1px 1px #808080,inset 2px 2px #000,inset -1px -1px #fff,inset -2px -2px #dfdfdf"></div>
<!-- system tree -->
<div class="a" style="left:848px;top:176px;width:172px;height:523px;background:#fff;box-shadow:inset 1px 1px #808080,inset 2px 2px #000,inset -1px -1px #fff,inset -2px -2px #dfdfdf"></div>
<svg class="a" style="left:850px;top:178px" width="170" height="270" viewBox="850 178 170 270"><defs><radialGradient id="gear" cx="0.35" cy="0.3" r="0.8"><stop offset="0" stop-color="#ffffff"/><stop offset="0.6" stop-color="#c8c8d8"/><stop offset="1" stop-color="#707080"/></radialGradient><linearGradient id="blk" x1="0" y1="0" x2="0" y2="1"><stop offset="0" stop-color="#ffe080"/><stop offset="1" stop-color="#e8a000"/></linearGradient></defs><g shape-rendering="crispEdges"><rect x="858" y="186" width="1" height="1" fill="#808080"/><rect x="858" y="188" width="1" height="1" fill="#808080"/><rect x="858" y="190" width="1" height="1" fill="#808080"/><rect x="858" y="192" width="1" height="1" fill="#808080"/><rect x="858" y="194" width="1" height="1" fill="#808080"/><rect x="858" y="196" width="1" height="1" fill="#808080"/><rect x="858" y="198" width="1" height="1" fill="#808080"/><rect x="858" y="200" width="1" height="1" fill="#808080"/><rect x="858" y="202" width="1" height="1" fill="#808080"/><rect x="858" y="204" width="1" height="1" fill="#808080"/><rect x="858" y="206" width="1" height="1" fill="#808080"/><rect x="858" y="208" width="1" height="1" fill="#808080"/><rect x="858" y="210" width="1" height="1" fill="#808080"/><rect x="858" y="212" width="1" height="1" fill="#808080"/><rect x="858" y="214" width="1" height="1" fill="#808080"/><rect x="858" y="216" width="1" height="1" fill="#808080"/><rect x="858" y="218" width="1" height="1" fill="#808080"/><rect x="858" y="220" width="1" height="1" fill="#808080"/><rect x="858" y="222" width="1" height="1" fill="#808080"/><rect x="858" y="224" width="1" height="1" fill="#808080"/><rect x="858" y="226" width="1" height="1" fill="#808080"/><rect x="858" y="228" width="1" height="1" fill="#808080"/><rect x="858" y="230" width="1" height="1" fill="#808080"/><rect x="858" y="232" width="1" height="1" fill="#808080"/><rect x="858" y="234" width="1" height="1" fill="#808080"/><rect x="858" y="236" width="1" height="1" fill="#808080"/><rect x="858" y="238" width="1" height="1" fill="#808080"/><rect x="858" y="240" width="1" height="1" fill="#808080"/><rect x="858" y="242" width="1" height="1" fill="#808080"/><rect x="858" y="244" width="1" height="1" fill="#808080"/><rect x="858" y="246" width="1" height="1" fill="#808080"/><rect x="858" y="248" width="1" height="1" fill="#808080"/><rect x="858" y="250" width="1" height="1" fill="#808080"/><rect x="858" y="252" width="1" height="1" fill="#808080"/><rect x="858" y="254" width="1" height="1" fill="#808080"/><rect x="858" y="256" width="1" height="1" fill="#808080"/><rect x="858" y="258" width="1" height="1" fill="#808080"/><rect x="858" y="260" width="1" height="1" fill="#808080"/><rect x="858" y="262" width="1" height="1" fill="#808080"/><rect x="858" y="264" width="1" height="1" fill="#808080"/><rect x="858" y="266" width="1" height="1" fill="#808080"/><rect x="858" y="268" width="1" height="1" fill="#808080"/><rect x="858" y="270" width="1" height="1" fill="#808080"/><rect x="858" y="272" width="1" height="1" fill="#808080"/><rect x="858" y="274" width="1" height="1" fill="#808080"/><rect x="858" y="276" width="1" height="1" fill="#808080"/><rect x="858" y="278" width="1" height="1" fill="#808080"/><rect x="858" y="280" width="1" height="1" fill="#808080"/><rect x="858" y="282" width="1" height="1" fill="#808080"/><rect x="858" y="284" width="1" height="1" fill="#808080"/><rect x="858" y="286" width="1" height="1" fill="#808080"/><rect x="858" y="288" width="1" height="1" fill="#808080"/><rect x="858" y="290" width="1" height="1" fill="#808080"/><rect x="858" y="292" width="1" height="1" fill="#808080"/><rect x="858" y="294" width="1" height="1" fill="#808080"/><rect x="858" y="296" width="1" height="1" fill="#808080"/><rect x="858" y="298" width="1" height="1" fill="#808080"/><rect x="858" y="300" width="1" height="1" fill="#808080"/><rect x="858" y="302" width="1" height="1" fill="#808080"/><rect x="858" y="304" width="1" height="1" fill="#808080"/><rect x="858" y="306" width="1" height="1" fill="#808080"/><rect x="858" y="308" width="1" height="1" fill="#808080"/><rect x="858" y="310" width="1" height="1" fill="#808080"/><rect x="858" y="312" width="1" height="1" fill="#808080"/><rect x="858" y="314" width="1" height="1" fill="#808080"/><rect x="858" y="316" width="1" height="1" fill="#808080"/><rect x="858" y="318" width="1" height="1" fill="#808080"/><rect x="858" y="320" width="1" height="1" fill="#808080"/><rect x="858" y="322" width="1" height="1" fill="#808080"/><rect x="858" y="324" width="1" height="1" fill="#808080"/><rect x="858" y="326" width="1" height="1" fill="#808080"/><rect x="858" y="328" width="1" height="1" fill="#808080"/><rect x="858" y="330" width="1" height="1" fill="#808080"/><rect x="858" y="332" width="1" height="1" fill="#808080"/><rect x="858" y="334" width="1" height="1" fill="#808080"/><rect x="858" y="336" width="1" height="1" fill="#808080"/><rect x="858" y="338" width="1" height="1" fill="#808080"/><rect x="858" y="340" width="1" height="1" fill="#808080"/><rect x="858" y="342" width="1" height="1" fill="#808080"/><rect x="858" y="344" width="1" height="1" fill="#808080"/><rect x="858" y="346" width="1" height="1" fill="#808080"/><rect x="858" y="348" width="1" height="1" fill="#808080"/><rect x="858" y="350" width="1" height="1" fill="#808080"/><rect x="858" y="352" width="1" height="1" fill="#808080"/><rect x="858" y="354" width="1" height="1" fill="#808080"/><rect x="858" y="356" width="1" height="1" fill="#808080"/><rect x="858" y="358" width="1" height="1" fill="#808080"/><rect x="858" y="360" width="1" height="1" fill="#808080"/><rect x="858" y="362" width="1" height="1" fill="#808080"/><rect x="858" y="364" width="1" height="1" fill="#808080"/><rect x="858" y="366" width="1" height="1" fill="#808080"/><rect x="858" y="368" width="1" height="1" fill="#808080"/><rect x="858" y="370" width="1" height="1" fill="#808080"/><rect x="858" y="372" width="1" height="1" fill="#808080"/><rect x="858" y="374" width="1" height="1" fill="#808080"/><rect x="858" y="376" width="1" height="1" fill="#808080"/><rect x="858" y="378" width="1" height="1" fill="#808080"/><rect x="858" y="380" width="1" height="1" fill="#808080"/><rect x="858" y="382" width="1" height="1" fill="#808080"/><rect x="858" y="384" width="1" height="1" fill="#808080"/><rect x="858" y="386" width="1" height="1" fill="#808080"/><rect x="858" y="388" width="1" height="1" fill="#808080"/><rect x="858" y="390" width="1" height="1" fill="#808080"/><rect x="858" y="392" width="1" height="1" fill="#808080"/><rect x="858" y="394" width="1" height="1" fill="#808080"/><rect x="858" y="396" width="1" height="1" fill="#808080"/><rect x="858" y="398" width="1" height="1" fill="#808080"/><rect x="858" y="400" width="1" height="1" fill="#808080"/><rect x="858" y="402" width="1" height="1" fill="#808080"/><rect x="858" y="404" width="1" height="1" fill="#808080"/><rect x="858" y="406" width="1" height="1" fill="#808080"/><rect x="858" y="408" width="1" height="1" fill="#808080"/><rect x="858" y="410" width="1" height="1" fill="#808080"/><rect x="858" y="412" width="1" height="1" fill="#808080"/><rect x="858" y="414" width="1" height="1" fill="#808080"/><rect x="858" y="416" width="1" height="1" fill="#808080"/><rect x="858" y="418" width="1" height="1" fill="#808080"/><rect x="858" y="420" width="1" height="1" fill="#808080"/><rect x="858" y="422" width="1" height="1" fill="#808080"/><rect x="858" y="424" width="1" height="1" fill="#808080"/><rect x="858" y="426" width="1" height="1" fill="#808080"/><rect x="879" y="210" width="1" height="1" fill="#808080"/><rect x="879" y="212" width="1" height="1" fill="#808080"/><rect x="879" y="214" width="1" height="1" fill="#808080"/><rect x="879" y="216" width="1" height="1" fill="#808080"/><rect x="879" y="218" width="1" height="1" fill="#808080"/><rect x="879" y="220" width="1" height="1" fill="#808080"/><rect x="879" y="222" width="1" height="1" fill="#808080"/><rect x="879" y="224" width="1" height="1" fill="#808080"/><rect x="879" y="226" width="1" height="1" fill="#808080"/><rect x="879" y="228" width="1" height="1" fill="#808080"/><rect x="879" y="230" width="1" height="1" fill="#808080"/><rect x="879" y="232" width="1" height="1" fill="#808080"/><rect x="879" y="234" width="1" height="1" fill="#808080"/><rect x="879" y="236" width="1" height="1" fill="#808080"/><rect x="879" y="238" width="1" height="1" fill="#808080"/><rect x="879" y="240" width="1" height="1" fill="#808080"/><rect x="879" y="242" width="1" height="1" fill="#808080"/><rect x="879" y="244" width="1" height="1" fill="#808080"/><rect x="879" y="246" width="1" height="1" fill="#808080"/><rect x="879" y="248" width="1" height="1" fill="#808080"/><rect x="879" y="250" width="1" height="1" fill="#808080"/><rect x="879" y="252" width="1" height="1" fill="#808080"/><rect x="879" y="254" width="1" height="1" fill="#808080"/><rect x="879" y="256" width="1" height="1" fill="#808080"/><rect x="879" y="258" width="1" height="1" fill="#808080"/><rect x="879" y="260" width="1" height="1" fill="#808080"/><rect x="879" y="262" width="1" height="1" fill="#808080"/><rect x="879" y="264" width="1" height="1" fill="#808080"/><rect x="879" y="266" width="1" height="1" fill="#808080"/><rect x="879" y="268" width="1" height="1" fill="#808080"/><rect x="879" y="270" width="1" height="1" fill="#808080"/><rect x="879" y="272" width="1" height="1" fill="#808080"/><rect x="879" y="274" width="1" height="1" fill="#808080"/><rect x="879" y="276" width="1" height="1" fill="#808080"/><rect x="879" y="278" width="1" height="1" fill="#808080"/><rect x="879" y="280" width="1" height="1" fill="#808080"/><rect x="879" y="282" width="1" height="1" fill="#808080"/><rect x="879" y="284" width="1" height="1" fill="#808080"/><rect x="879" y="286" width="1" height="1" fill="#808080"/><rect x="879" y="288" width="1" height="1" fill="#808080"/><rect x="879" y="290" width="1" height="1" fill="#808080"/><rect x="879" y="292" width="1" height="1" fill="#808080"/><rect x="879" y="294" width="1" height="1" fill="#808080"/><rect x="879" y="296" width="1" height="1" fill="#808080"/><rect x="879" y="298" width="1" height="1" fill="#808080"/><rect x="879" y="300" width="1" height="1" fill="#808080"/><rect x="879" y="302" width="1" height="1" fill="#808080"/><rect x="879" y="304" width="1" height="1" fill="#808080"/><rect x="879" y="306" width="1" height="1" fill="#808080"/><rect x="879" y="308" width="1" height="1" fill="#808080"/><rect x="879" y="310" width="1" height="1" fill="#808080"/><rect x="879" y="312" width="1" height="1" fill="#808080"/><rect x="879" y="314" width="1" height="1" fill="#808080"/><rect x="879" y="316" width="1" height="1" fill="#808080"/><rect x="879" y="318" width="1" height="1" fill="#808080"/><rect x="879" y="320" width="1" height="1" fill="#808080"/><rect x="879" y="322" width="1" height="1" fill="#808080"/><rect x="879" y="324" width="1" height="1" fill="#808080"/><rect x="879" y="326" width="1" height="1" fill="#808080"/><rect x="879" y="328" width="1" height="1" fill="#808080"/><rect x="879" y="330" width="1" height="1" fill="#808080"/><rect x="859" y="186" width="1" height="1" fill="#808080"/><rect x="861" y="186" width="1" height="1" fill="#808080"/><rect x="863" y="186" width="1" height="1" fill="#808080"/><rect x="865" y="186" width="1" height="1" fill="#808080"/><rect x="867" y="186" width="1" height="1" fill="#808080"/><rect x="869" y="186" width="1" height="1" fill="#808080"/><rect x="859" y="202" width="1" height="1" fill="#808080"/><rect x="861" y="202" width="1" height="1" fill="#808080"/><rect x="863" y="202" width="1" height="1" fill="#808080"/><rect x="865" y="202" width="1" height="1" fill="#808080"/><rect x="867" y="202" width="1" height="1" fill="#808080"/><rect x="869" y="202" width="1" height="1" fill="#808080"/><rect x="880" y="218" width="1" height="1" fill="#808080"/><rect x="882" y="218" width="1" height="1" fill="#808080"/><rect x="884" y="218" width="1" height="1" fill="#808080"/><rect x="886" y="218" width="1" height="1" fill="#808080"/><rect x="888" y="218" width="1" height="1" fill="#808080"/><rect x="890" y="218" width="1" height="1" fill="#808080"/><rect x="880" y="234" width="1" height="1" fill="#808080"/><rect x="882" y="234" width="1" height="1" fill="#808080"/><rect x="884" y="234" width="1" height="1" fill="#808080"/><rect x="886" y="234" width="1" height="1" fill="#808080"/><rect x="888" y="234" width="1" height="1" fill="#808080"/><rect x="890" y="234" width="1" height="1" fill="#808080"/><rect x="880" y="250" width="1" height="1" fill="#808080"/><rect x="882" y="250" width="1" height="1" fill="#808080"/><rect x="884" y="250" width="1" height="1" fill="#808080"/><rect x="886" y="250" width="1" height="1" fill="#808080"/><rect x="888" y="250" width="1" height="1" fill="#808080"/><rect x="890" y="250" width="1" height="1" fill="#808080"/><rect x="880" y="266" width="1" height="1" fill="#808080"/><rect x="882" y="266" width="1" height="1" fill="#808080"/><rect x="884" y="266" width="1" height="1" fill="#808080"/><rect x="886" y="266" width="1" height="1" fill="#808080"/><rect x="888" y="266" width="1" height="1" fill="#808080"/><rect x="890" y="266" width="1" height="1" fill="#808080"/><rect x="880" y="282" width="1" height="1" fill="#808080"/><rect x="882" y="282" width="1" height="1" fill="#808080"/><rect x="884" y="282" width="1" height="1" fill="#808080"/><rect x="886" y="282" width="1" height="1" fill="#808080"/><rect x="888" y="282" width="1" height="1" fill="#808080"/><rect x="890" y="282" width="1" height="1" fill="#808080"/><rect x="880" y="298" width="1" height="1" fill="#808080"/><rect x="882" y="298" width="1" height="1" fill="#808080"/><rect x="884" y="298" width="1" height="1" fill="#808080"/><rect x="886" y="298" width="1" height="1" fill="#808080"/><rect x="888" y="298" width="1" height="1" fill="#808080"/><rect x="890" y="298" width="1" height="1" fill="#808080"/><rect x="880" y="314" width="1" height="1" fill="#808080"/><rect x="882" y="314" width="1" height="1" fill="#808080"/><rect x="884" y="314" width="1" height="1" fill="#808080"/><rect x="886" y="314" width="1" height="1" fill="#808080"/><rect x="888" y="314" width="1" height="1" fill="#808080"/><rect x="890" y="314" width="1" height="1" fill="#808080"/><rect x="880" y="330" width="1" height="1" fill="#808080"/><rect x="882" y="330" width="1" height="1" fill="#808080"/><rect x="884" y="330" width="1" height="1" fill="#808080"/><rect x="886" y="330" width="1" height="1" fill="#808080"/><rect x="888" y="330" width="1" height="1" fill="#808080"/><rect x="890" y="330" width="1" height="1" fill="#808080"/><rect x="859" y="346" width="1" height="1" fill="#808080"/><rect x="861" y="346" width="1" height="1" fill="#808080"/><rect x="863" y="346" width="1" height="1" fill="#808080"/><rect x="865" y="346" width="1" height="1" fill="#808080"/><rect x="867" y="346" width="1" height="1" fill="#808080"/><rect x="869" y="346" width="1" height="1" fill="#808080"/><rect x="859" y="362" width="1" height="1" fill="#808080"/><rect x="861" y="362" width="1" height="1" fill="#808080"/><rect x="863" y="362" width="1" height="1" fill="#808080"/><rect x="865" y="362" width="1" height="1" fill="#808080"/><rect x="867" y="362" width="1" height="1" fill="#808080"/><rect x="869" y="362" width="1" height="1" fill="#808080"/><rect x="859" y="378" width="1" height="1" fill="#808080"/><rect x="861" y="378" width="1" height="1" fill="#808080"/><rect x="863" y="378" width="1" height="1" fill="#808080"/><rect x="865" y="378" width="1" height="1" fill="#808080"/><rect x="867" y="378" width="1" height="1" fill="#808080"/><rect x="869" y="378" width="1" height="1" fill="#808080"/><rect x="859" y="394" width="1" height="1" fill="#808080"/><rect x="861" y="394" width="1" height="1" fill="#808080"/><rect x="863" y="394" width="1" height="1" fill="#808080"/><rect x="865" y="394" width="1" height="1" fill="#808080"/><rect x="867" y="394" width="1" height="1" fill="#808080"/><rect x="869" y="394" width="1" height="1" fill="#808080"/><rect x="859" y="410" width="1" height="1" fill="#808080"/><rect x="861" y="410" width="1" height="1" fill="#808080"/><rect x="863" y="410" width="1" height="1" fill="#808080"/><rect x="865" y="410" width="1" height="1" fill="#808080"/><rect x="867" y="410" width="1" height="1" fill="#808080"/><rect x="869" y="410" width="1" height="1" fill="#808080"/><rect x="859" y="426" width="1" height="1" fill="#808080"/><rect x="861" y="426" width="1" height="1" fill="#808080"/><rect x="863" y="426" width="1" height="1" fill="#808080"/><rect x="865" y="426" width="1" height="1" fill="#808080"/><rect x="867" y="426" width="1" height="1" fill="#808080"/><rect x="869" y="426" width="1" height="1" fill="#808080"/></g><rect x="854.5" y="182.5" width="8" height="8" fill="#fff" stroke="#808080" shape-rendering="crispEdges"/><rect x="856" y="186" width="5" height="1" fill="#000" shape-rendering="crispEdges"/><rect x="858" y="184" width="1" height="5" fill="#000" shape-rendering="crispEdges"/><path d="M872.5 180.5h14l-1 4h-13z" fill="#606060" stroke="#000"/><path d="M874 182h6v2h-6z" fill="#e0e0e0"/><path d="M880 185l6 6" stroke="#707070" stroke-width="3"/><circle cx="880" cy="185" r="3" fill="#d0d0e0" stroke="#000"/><rect x="854.5" y="198.5" width="8" height="8" fill="#fff" stroke="#808080" shape-rendering="crispEdges"/><rect x="856" y="202" width="5" height="1" fill="#000" shape-rendering="crispEdges"/><polygon points="878.8,195.0 880.2,195.0 881.0,197.5 882.0,197.9 884.3,196.7 885.3,197.7 884.1,200.0 884.5,201.0 887.0,201.8 887.0,203.2 884.5,204.0 884.1,205.0 885.3,207.3 884.3,208.3 882.0,207.1 881.0,207.5 880.2,210.0 878.8,210.0 878.0,207.5 877.0,207.1 874.7,208.3 873.7,207.3 874.9,205.0 874.5,204.0 872.0,203.2 872.0,201.8 874.5,201.0 874.9,200.0 873.7,197.7 874.7,196.7 877.0,197.9 878.0,197.5" fill="url(#gear)" stroke="#000" stroke-width="1"/><circle cx="879.5" cy="202.5" r="2.5" fill="#303038"/><circle cx="878.8" cy="201.8" r="0.9" fill="#fff"/><polygon points="899.8,211.0 901.2,211.0 902.0,213.5 903.0,213.9 905.3,212.7 906.3,213.7 905.1,216.0 905.5,217.0 908.0,217.8 908.0,219.2 905.5,220.0 905.1,221.0 906.3,223.3 905.3,224.3 903.0,223.1 902.0,223.5 901.2,226.0 899.8,226.0 899.0,223.5 898.0,223.1 895.7,224.3 894.7,223.3 895.9,221.0 895.5,220.0 893.0,219.2 893.0,217.8 895.5,217.0 895.9,216.0 894.7,213.7 895.7,212.7 898.0,213.9 899.0,213.5" fill="url(#gear)" stroke="#000" stroke-width="1"/><circle cx="900.5" cy="218.5" r="2.5" fill="#303038"/><circle cx="899.8" cy="217.8" r="0.9" fill="#fff"/><polygon points="899.8,227.0 901.2,227.0 902.0,229.5 903.0,229.9 905.3,228.7 906.3,229.7 905.1,232.0 905.5,233.0 908.0,233.8 908.0,235.2 905.5,236.0 905.1,237.0 906.3,239.3 905.3,240.3 903.0,239.1 902.0,239.5 901.2,242.0 899.8,242.0 899.0,239.5 898.0,239.1 895.7,240.3 894.7,239.3 895.9,237.0 895.5,236.0 893.0,235.2 893.0,233.8 895.5,233.0 895.9,232.0 894.7,229.7 895.7,228.7 898.0,229.9 899.0,229.5" fill="url(#gear)" stroke="#000" stroke-width="1"/><circle cx="900.5" cy="234.5" r="2.5" fill="#303038"/><circle cx="899.8" cy="233.8" r="0.9" fill="#fff"/><polygon points="899.8,243.0 901.2,243.0 902.0,245.5 903.0,245.9 905.3,244.7 906.3,245.7 905.1,248.0 905.5,249.0 908.0,249.8 908.0,251.2 905.5,252.0 905.1,253.0 906.3,255.3 905.3,256.3 903.0,255.1 902.0,255.5 901.2,258.0 899.8,258.0 899.0,255.5 898.0,255.1 895.7,256.3 894.7,255.3 895.9,253.0 895.5,252.0 893.0,251.2 893.0,249.8 895.5,249.0 895.9,248.0 894.7,245.7 895.7,244.7 898.0,245.9 899.0,245.5" fill="url(#gear)" stroke="#000" stroke-width="1"/><circle cx="900.5" cy="250.5" r="2.5" fill="#303038"/><circle cx="899.8" cy="249.8" r="0.9" fill="#fff"/><polygon points="899.8,259.0 901.2,259.0 902.0,261.5 903.0,261.9 905.3,260.7 906.3,261.7 905.1,264.0 905.5,265.0 908.0,265.8 908.0,267.2 905.5,268.0 905.1,269.0 906.3,271.3 905.3,272.3 903.0,271.1 902.0,271.5 901.2,274.0 899.8,274.0 899.0,271.5 898.0,271.1 895.7,272.3 894.7,271.3 895.9,269.0 895.5,268.0 893.0,267.2 893.0,265.8 895.5,265.0 895.9,264.0 894.7,261.7 895.7,260.7 898.0,261.9 899.0,261.5" fill="url(#gear)" stroke="#000" stroke-width="1"/><circle cx="900.5" cy="266.5" r="2.5" fill="#303038"/><circle cx="899.8" cy="265.8" r="0.9" fill="#fff"/><polygon points="899.8,275.0 901.2,275.0 902.0,277.5 903.0,277.9 905.3,276.7 906.3,277.7 905.1,280.0 905.5,281.0 908.0,281.8 908.0,283.2 905.5,284.0 905.1,285.0 906.3,287.3 905.3,288.3 903.0,287.1 902.0,287.5 901.2,290.0 899.8,290.0 899.0,287.5 898.0,287.1 895.7,288.3 894.7,287.3 895.9,285.0 895.5,284.0 893.0,283.2 893.0,281.8 895.5,281.0 895.9,280.0 894.7,277.7 895.7,276.7 898.0,277.9 899.0,277.5" fill="url(#gear)" stroke="#000" stroke-width="1"/><circle cx="900.5" cy="282.5" r="2.5" fill="#303038"/><circle cx="899.8" cy="281.8" r="0.9" fill="#fff"/><polygon points="899.8,291.0 901.2,291.0 902.0,293.5 903.0,293.9 905.3,292.7 906.3,293.7 905.1,296.0 905.5,297.0 908.0,297.8 908.0,299.2 905.5,300.0 905.1,301.0 906.3,303.3 905.3,304.3 903.0,303.1 902.0,303.5 901.2,306.0 899.8,306.0 899.0,303.5 898.0,303.1 895.7,304.3 894.7,303.3 895.9,301.0 895.5,300.0 893.0,299.2 893.0,297.8 895.5,297.0 895.9,296.0 894.7,293.7 895.7,292.7 898.0,293.9 899.0,293.5" fill="url(#gear)" stroke="#000" stroke-width="1"/><circle cx="900.5" cy="298.5" r="2.5" fill="#303038"/><circle cx="899.8" cy="297.8" r="0.9" fill="#fff"/><polygon points="899.8,307.0 901.2,307.0 902.0,309.5 903.0,309.9 905.3,308.7 906.3,309.7 905.1,312.0 905.5,313.0 908.0,313.8 908.0,315.2 905.5,316.0 905.1,317.0 906.3,319.3 905.3,320.3 903.0,319.1 902.0,319.5 901.2,322.0 899.8,322.0 899.0,319.5 898.0,319.1 895.7,320.3 894.7,319.3 895.9,317.0 895.5,316.0 893.0,315.2 893.0,313.8 895.5,313.0 895.9,312.0 894.7,309.7 895.7,308.7 898.0,309.9 899.0,309.5" fill="url(#gear)" stroke="#000" stroke-width="1"/><circle cx="900.5" cy="314.5" r="2.5" fill="#303038"/><circle cx="899.8" cy="313.8" r="0.9" fill="#fff"/><polygon points="899.8,323.0 901.2,323.0 902.0,325.5 903.0,325.9 905.3,324.7 906.3,325.7 905.1,328.0 905.5,329.0 908.0,329.8 908.0,331.2 905.5,332.0 905.1,333.0 906.3,335.3 905.3,336.3 903.0,335.1 902.0,335.5 901.2,338.0 899.8,338.0 899.0,335.5 898.0,335.1 895.7,336.3 894.7,335.3 895.9,333.0 895.5,332.0 893.0,331.2 893.0,329.8 895.5,329.0 895.9,328.0 894.7,325.7 895.7,324.7 898.0,325.9 899.0,325.5" fill="url(#gear)" stroke="#000" stroke-width="1"/><circle cx="900.5" cy="330.5" r="2.5" fill="#303038"/><circle cx="899.8" cy="329.8" r="0.9" fill="#fff"/><rect x="854.5" y="358.5" width="8" height="8" fill="#fff" stroke="#808080" shape-rendering="crispEdges"/><rect x="856" y="362" width="5" height="1" fill="#000" shape-rendering="crispEdges"/><rect x="858" y="360" width="1" height="5" fill="#000" shape-rendering="crispEdges"/><rect x="854.5" y="374.5" width="8" height="8" fill="#fff" stroke="#808080" shape-rendering="crispEdges"/><rect x="856" y="378" width="5" height="1" fill="#000" shape-rendering="crispEdges"/><rect x="858" y="376" width="1" height="5" fill="#000" shape-rendering="crispEdges"/><rect x="854.5" y="390.5" width="8" height="8" fill="#fff" stroke="#808080" shape-rendering="crispEdges"/><rect x="856" y="394" width="5" height="1" fill="#000" shape-rendering="crispEdges"/><rect x="858" y="392" width="1" height="5" fill="#000" shape-rendering="crispEdges"/><rect x="854.5" y="406.5" width="8" height="8" fill="#fff" stroke="#808080" shape-rendering="crispEdges"/><rect x="856" y="410" width="5" height="1" fill="#000" shape-rendering="crispEdges"/><rect x="858" y="408" width="1" height="5" fill="#000" shape-rendering="crispEdges"/><rect x="854.5" y="422.5" width="8" height="8" fill="#fff" stroke="#808080" shape-rendering="crispEdges"/><rect x="856" y="426" width="5" height="1" fill="#000" shape-rendering="crispEdges"/><rect x="858" y="424" width="1" height="5" fill="#000" shape-rendering="crispEdges"/><g shape-rendering="crispEdges"><rect x="870" y="337" width="10" height="98" fill="#000"/><rect x="871" y="338" width="8" height="3" fill="url(#blk)"/><rect x="873" y="339" width="1" height="1" fill="#000"/><rect x="871" y="342" width="8" height="3" fill="url(#blk)"/><rect x="873" y="343" width="1" height="1" fill="#000"/><rect x="871" y="346" width="8" height="3" fill="url(#blk)"/><rect x="873" y="347" width="1" height="1" fill="#000"/><rect x="871" y="350" width="8" height="3" fill="url(#blk)"/><rect x="873" y="351" width="1" height="1" fill="#000"/><rect x="871" y="354" width="8" height="3" fill="url(#blk)"/><rect x="873" y="355" width="1" height="1" fill="#000"/><rect x="871" y="358" width="8" height="3" fill="url(#blk)"/><rect x="873" y="359" width="1" height="1" fill="#000"/><rect x="871" y="362" width="8" height="3" fill="url(#blk)"/><rect x="873" y="363" width="1" height="1" fill="#000"/><rect x="871" y="366" width="8" height="3" fill="url(#blk)"/><rect x="873" y="367" width="1" height="1" fill="#000"/><rect x="871" y="370" width="8" height="3" fill="url(#blk)"/><rect x="873" y="371" width="1" height="1" fill="#000"/><rect x="871" y="374" width="8" height="3" fill="url(#blk)"/><rect x="873" y="375" width="1" height="1" fill="#000"/><rect x="871" y="378" width="8" height="3" fill="url(#blk)"/><rect x="873" y="379" width="1" height="1" fill="#000"/><rect x="871" y="382" width="8" height="3" fill="url(#blk)"/><rect x="873" y="383" width="1" height="1" fill="#000"/><rect x="871" y="386" width="8" height="3" fill="url(#blk)"/><rect x="873" y="387" width="1" height="1" fill="#000"/><rect x="871" y="390" width="8" height="3" fill="url(#blk)"/><rect x="873" y="391" width="1" height="1" fill="#000"/><rect x="871" y="394" width="8" height="3" fill="url(#blk)"/><rect x="873" y="395" width="1" height="1" fill="#000"/><rect x="871" y="398" width="8" height="3" fill="url(#blk)"/><rect x="873" y="399" width="1" height="1" fill="#000"/><rect x="871" y="402" width="8" height="3" fill="url(#blk)"/><rect x="873" y="403" width="1" height="1" fill="#000"/><rect x="871" y="406" width="8" height="3" fill="url(#blk)"/><rect x="873" y="407" width="1" height="1" fill="#000"/><rect x="871" y="410" width="8" height="3" fill="url(#blk)"/><rect x="873" y="411" width="1" height="1" fill="#000"/><rect x="871" y="414" width="8" height="3" fill="url(#blk)"/><rect x="873" y="415" width="1" height="1" fill="#000"/><rect x="871" y="418" width="8" height="3" fill="url(#blk)"/><rect x="873" y="419" width="1" height="1" fill="#000"/><rect x="871" y="422" width="8" height="3" fill="url(#blk)"/><rect x="873" y="423" width="1" height="1" fill="#000"/><rect x="871" y="426" width="8" height="3" fill="url(#blk)"/><rect x="873" y="427" width="1" height="1" fill="#000"/><rect x="871" y="430" width="8" height="3" fill="url(#blk)"/><rect x="873" y="431" width="1" height="1" fill="#000"/></g><polygon points="879.5,339.5 879.5,339.5 880.8,342.2 883.3,340.6 882.9,343.6 885.9,343.6 884.0,345.9 886.4,347.5 883.6,348.4 884.8,351.1 881.9,350.3 881.5,353.2 879.5,351.0 879.5,353.5" fill="url(#gear)" stroke="#000" stroke-width="1"/><polygon points="879.5,355.5 879.5,355.5 880.8,358.2 883.3,356.6 882.9,359.6 885.9,359.6 884.0,361.9 886.4,363.5 883.6,364.4 884.8,367.1 881.9,366.3 881.5,369.2 879.5,367.0 879.5,369.5" fill="url(#gear)" stroke="#000" stroke-width="1"/><polygon points="879.5,371.5 879.5,371.5 880.8,374.2 883.3,372.6 882.9,375.6 885.9,375.6 884.0,377.9 886.4,379.5 883.6,380.4 884.8,383.1 881.9,382.3 881.5,385.2 879.5,383.0 879.5,385.5" fill="url(#gear)" stroke="#000" stroke-width="1"/><polygon points="879.5,387.5 879.5,387.5 880.8,390.2 883.3,388.6 882.9,391.6 885.9,391.6 884.0,393.9 886.4,395.5 883.6,396.4 884.8,399.1 881.9,398.3 881.5,401.2 879.5,399.0 879.5,401.5" fill="url(#gear)" stroke="#000" stroke-width="1"/><polygon points="879.5,403.5 879.5,403.5 880.8,406.2 883.3,404.6 882.9,407.6 885.9,407.6 884.0,409.9 886.4,411.5 883.6,412.4 884.8,415.1 881.9,414.3 881.5,417.2 879.5,415.0 879.5,417.5" fill="url(#gear)" stroke="#000" stroke-width="1"/><polygon points="879.5,419.5 879.5,419.5 880.8,422.2 883.3,420.6 882.9,423.6 885.9,423.6 884.0,425.9 886.4,427.5 883.6,428.4 884.8,431.1 881.9,430.3 881.5,433.2 879.5,431.0 879.5,433.5" fill="url(#gear)" stroke="#000" stroke-width="1"/></svg>
<div class="t" style="left:892px;top:181px">Data Set Exposers</div>
<div class="t" style="left:892px;top:197px">Primitive Objects</div>
<div class="t" style="left:913px;top:213px">Input</div>
<div class="t" style="left:913px;top:229px">Output</div>
<div class="t" style="left:913px;top:245px">AND</div>
<div class="t" style="left:913px;top:261px">OR</div>
<div class="t" style="left:913px;top:277px">INVERT</div>
<div class="t" style="left:913px;top:293px">Assign</div>
<div class="t" style="left:913px;top:309px">$Select</div>
<div class="t" style="left:913px;top:325px">Text</div>
<div class="t" style="left:892px;top:341px">Composite Objects</div>
<div class="t" style="left:892px;top:357px">$SystemLowLevel</div>
<div class="t" style="left:892px;top:373px">Bitwise Objects</div>
<div class="t" style="left:892px;top:389px">Logical</div>
<div class="t" style="left:892px;top:405px">Math</div>
<div class="t" style="left:892px;top:421px">Universal</div>
<svg class="a" style="left:850px;top:79px" width="120" height="40" viewBox="850 79 120 40" shape-rendering="crispEdges">
<rect x="854.5" y="82.5" width="8" height="8" fill="#fff" stroke="#808080"/><rect x="856" y="86" width="5" height="1" fill="#000"/>
<rect x="865" y="87" width="1" height="1" fill="#808080"/><rect x="867" y="87" width="1" height="1" fill="#808080"/><rect x="869" y="87" width="1" height="1" fill="#808080"/><rect x="878" y="93" width="1" height="1" fill="#808080"/><rect x="878" y="95" width="1" height="1" fill="#808080"/><rect x="878" y="97" width="1" height="1" fill="#808080"/><rect x="878" y="99" width="1" height="1" fill="#808080"/><rect x="878" y="101" width="1" height="1" fill="#808080"/><rect x="878" y="103" width="1" height="1" fill="#808080"/><rect x="879" y="103" width="1" height="1" fill="#808080"/><rect x="881" y="103" width="1" height="1" fill="#808080"/><rect x="883" y="103" width="1" height="1" fill="#808080"/><rect x="885" y="103" width="1" height="1" fill="#808080"/><rect x="887" y="103" width="1" height="1" fill="#808080"/>
<rect x="888" y="96" width="63" height="15" fill="#c0c0c0"/>
</svg>
<div class="t" style="left:871px;top:82px">New Project</div>
<div class="t" style="left:890px;top:98px">FACTORIAL</div>
<div class="a" style="left:1022px;top:72px;width:1px;height:628px;background:#808080"></div>
<div class="a" style="left:1023px;top:72px;width:1px;height:629px;background:#000"></div>
<div class="a" style="left:931px;top:699px;width:92px;height:1px;background:#808080"></div>
<div class="a" style="left:931px;top:700px;width:93px;height:1px;background:#000"></div>
<div class="a" style="left:844px;top:700px;width:88px;height:22px;background:#c0c0c0;box-shadow:inset 1px 0 #fff,inset -1px -1px #000,inset -2px -2px #808080"></div>
<div class="t" style="left:852px;top:707px">Project Objects</div>
<div class="a" style="left:932px;top:700px;width:87px;height:20px;background:#c0c0c0;box-shadow:inset 1px 0 #000,inset 2px 0 #fff,inset -1px -1px #000,inset -2px -2px #808080"></div>
<div class="t" style="left:937px;top:705px">System Objects</div>

<!-- STATUS BAR -->
<div class="a" style="left:0;top:722px;width:1024px;height:1px;background:#fff"></div>
<div class="t" style="left:1px;top:727px">Status</div>
<div class="a" style="left:35px;top:725px;width:1px;height:14px;background:#808080"></div>
<div class="a" style="left:36px;top:725px;width:1px;height:14px;background:#fff"></div>
<div class="t" style="left:40px;top:727px">Object Name: Input</div>
<div class="a" style="left:318px;top:725px;width:1px;height:14px;background:#808080"></div>
<div class="a" style="left:319px;top:725px;width:1px;height:14px;background:#fff"></div>
<div class="a" style="left:323px;top:725px;width:248px;height:14px;box-shadow:inset 1px 1px #808080,inset -1px -1px #fff"></div>
<div class="a" style="left:0;top:739px;width:1024px;height:1px;background:#808080"></div>

<!-- TASKBAR -->
<div class="a" style="left:0;top:740px;width:1024px;height:1px;background:#dfdfdf"></div>
<div class="a" style="left:0;top:741px;width:1024px;height:1px;background:#fff"></div>
<div class="btn" style="left:2px;top:744px;width:54px;height:22px"></div>
<svg class="a" style="left:0;top:744px" width="24" height="22" shape-rendering="crispEdges">
<path d="M12 5h2v-1h3v1h2v-1h3v14h-3v1h-2v-1h-3v1h-2z" fill="#000"/>
<path d="M13 7l1-1h2l1 1v3l-1 0h-2l-1 1z" fill="#ff2020"/>
<path d="M18 6h2l1 1v3h-2l-1-1z" fill="#00d000"/>
<path d="M13 12h3l1 1v3h-2l-2 1z" fill="#2040ff"/>
<path d="M18 12h2l1 1v3l-1 1h-2z" fill="#f0e000"/>
<rect x="6" y="9" width="1" height="1" fill="#000"/><rect x="8" y="9" width="4" height="1" fill="#ff2020"/><rect x="6" y="11" width="1" height="1" fill="#000"/><rect x="8" y="11" width="4" height="1" fill="#ff2020"/>
<rect x="6" y="13" width="1" height="1" fill="#000"/><rect x="8" y="13" width="4" height="1" fill="#2040ff"/><rect x="6" y="15" width="1" height="1" fill="#000"/><rect x="8" y="15" width="4" height="1" fill="#2040ff"/>
<rect x="9" y="6" width="3" height="12" fill="#000" fill-opacity="0.6"/>
</svg>
<div class="t" style="left:25px;top:750px;font-weight:bold;font-size:11px;letter-spacing:0.2px">Start</div>
<div class="a" style="left:59px;top:746px;width:1px;height:19px;background:#808080"></div>
<div class="a" style="left:60px;top:746px;width:1px;height:19px;background:#fff"></div>
<div class="a" style="left:62px;top:747px;width:3px;height:17px;box-shadow:inset 1px 1px #fff,inset -1px -1px #808080"></div>

<div class="btn" style="left:69px;top:744px;width:79px;height:22px"></div>
<svg class="a" style="left:73px;top:747px" width="16" height="16"><path d="M2 14l5-4 8 0-5 4z" fill="#2030a0"/><rect x="6" y="4" width="8" height="7" fill="#808080" stroke="#000"/><path d="M8 2h4v3h-4z" fill="#00c0e0"/><path d="M1 12l6-3 7 1-6 3z" fill="#f0d000"/></svg>
<div class="t" style="left:91px;top:749px;letter-spacing:0.2px">pcANYW...</div>

<div class="btn" style="left:151px;top:744px;width:79px;height:22px"></div>
<div class="btn" style="left:233px;top:744px;width:79px;height:22px"></div>
<div class="btn" style="left:315px;top:744px;width:79px;height:22px"></div>
<div class="btn" style="left:397px;top:744px;width:79px;height:22px"></div>
<div class="btn" style="left:479px;top:744px;width:79px;height:22px"></div>
<div class="a dith" style="left:561px;top:744px;width:79px;height:22px;box-shadow:inset 1px 1px #000,inset -1px -1px #fff,inset 2px 2px #808080,inset -2px -2px #dfdfdf"></div>
<svg class="a" style="left:0;top:740px" width="1024" height="28" viewBox="0 740 1024 28">
<defs><path id="viva" d="M2 5h16v1h-1v1h-1v1h-1v1h-1v1h-1v1h-1v1h-1v1h-2v-1h-1v-1h-1v-1h-1v-1h-1v-1h-1v-1h-1v-1h-1z"/>
<g id="vicon"><use href="#viva" fill="#000"/><path d="M4 6h4v1h-1v1h-2v-1h-1z" fill="#ff2020"/><path d="M12 6h4v1h-1v1h-2v-1h-1z" fill="#00e000"/><path d="M9 7h2v1h1v1h-4v-1h1z" fill="#f8c800"/><path d="M8 10h3v1h-1v1h-1v-1h-1z" fill="#2040ff"/></g>
<linearGradient id="fy" x1="0" y1="0" x2="1" y2="1"><stop offset="0" stop-color="#fff8b0"/><stop offset="1" stop-color="#e8c860"/></linearGradient>
</defs>
<g shape-rendering="crispEdges">
<use href="#vicon" x="153" y="746"/>
<use href="#vicon" x="235" y="746"/>
<use href="#vicon" x="317" y="746"/>
<use href="#vicon" x="399" y="746"/>
<use href="#vicon" x="564" y="747"/>
</g>
<!-- folder -->
<path d="M483.5 750.5l2-2h5l2 2h6v10h-15z" fill="url(#fy)" stroke="#8a8a20"/><path d="M484 754h15l-2 6h-13z" fill="#f8e890" stroke="none"/><path d="M499.5 754v7" stroke="#000" stroke-width="1"/><path d="M485 761.5h14" stroke="#000"/>
<!-- quick launch 1 -->
<rect x="665.5" y="747.5" width="15" height="15" fill="#1870a0" stroke="#000"/><path d="M668 757l5-5 6 3-5 5z" fill="#e8e8e8" stroke="#404040"/><path d="M672 755l7-7" stroke="#f0d000" stroke-width="2"/><rect x="678" y="747" width="2" height="2" fill="#e00000"/>
<!-- IE -->
<path d="M700 755.5h-9q0 4 4 4q2 0 4-1.5v2.5q-2 1-4.5 1q-6 0-6-6q0-6 6-6q5.5 0 5.5 6z" fill="#1040e0" stroke="#000" stroke-width="0.6"/><rect x="692" y="752" width="5" height="1.5" fill="#fff"/><path d="M689 760q-2-3 3-8q6-5 11-5" fill="none" stroke="#e0c000" stroke-width="1.2"/>
<!-- card arrows -->
<rect x="712.5" y="751.5" width="15" height="8" fill="#fff" stroke="#404040"/><path d="M716 748q-4 1-3 5M723 762q4-1 3-5" stroke="#2080e0" stroke-width="2" fill="none"/><rect x="720" y="753" width="4" height="3" fill="#f0d000"/><rect x="724" y="752" width="2" height="2" fill="#e00000"/>
<!-- MSDEV -->
<rect x="735" y="747" width="15" height="7" fill="#000"/><path d="M736 748h2v5h-2zM740 748h2v5h-2zM744 748h4v2h-4z" fill="#fff" fill-opacity="0.5"/><rect x="735" y="754" width="7" height="8" fill="#e00000"/><rect x="742" y="754" width="8" height="8" fill="#0000a0"/><path d="M749 756h-5v4h5" stroke="#f0f000" stroke-width="2" fill="none"/><rect x="737" y="756" width="3" height="4" fill="#000"/>
<!-- window -->
<rect x="757.5" y="748.5" width="15" height="13" fill="#f0f0ff" stroke="#000"/><rect x="758" y="749" width="14" height="3" fill="#0000a0"/><rect x="767" y="750" width="1" height="1" fill="#fff"/><rect x="769" y="750" width="1" height="1" fill="#fff"/>
<!-- tray -->
<rect x="893.5" y="748.5" width="12" height="10" fill="#fff" stroke="#000"/><rect x="894" y="749" width="11" height="3" fill="#0000a0"/><rect x="895" y="749" width="2" height="3" fill="#fff"/><rect x="898" y="749" width="2" height="3" fill="#fff"/><circle cx="904.5" cy="758.5" r="4" fill="#fff" stroke="#d00000" stroke-width="2"/><path d="M904.5 756v3h2" stroke="#000" stroke-width="0.8" fill="none"/>
<path d="M912 756l6-7 7 5-6 8z" fill="#f0f020" stroke="#404000"/><path d="M914 756l5 4M916 753l6 4" stroke="#808000" stroke-width="0.8"/><rect x="918" y="754" width="2" height="2" fill="#2040ff"/>
<path d="M928 761h14l1-4h-13z" fill="#c0c0c0" stroke="#404040"/><path d="M932 752q3-4 7-2l2 4" fill="none" stroke="#20a0a0" stroke-width="1.5"/><rect x="934" y="758" width="4" height="2" fill="#d0d080"/>
<path d="M947 750l3-2 3 2 3-3 2 3-3 2v4l3 3h-5l-2-2-3 3-2-1 2-4z" fill="#e00000" stroke="#400000" stroke-width="0.6"/><path d="M945 756h4v2h-4z" fill="#2030a0"/>
</svg>

<div class="t" style="left:173px;top:749px;letter-spacing:0.3px">Viva 1.5</div>
<div class="t" style="left:255px;top:749px;letter-spacing:0.3px">Viva 1.5</div>
<div class="t" style="left:337px;top:749px;letter-spacing:0.3px">Viva 1.5</div>
<div class="t" style="left:419px;top:749px;letter-spacing:0.3px">Viva 1.5</div>
<div class="t" style="left:501px;top:749px;letter-spacing:0.3px">E:\William</div>
<div class="t" style="left:583px;top:751px;font-weight:bold;font-size:11px;letter-spacing:0.8px">Viva 1.5</div>

<div class="a" style="left:651px;top:746px;width:1px;height:19px;background:#808080"></div>
<div class="a" style="left:652px;top:746px;width:1px;height:19px;background:#fff"></div>
<div class="a" style="left:654px;top:747px;width:3px;height:17px;box-shadow:inset 1px 1px #fff,inset -1px -1px #808080"></div>

<div class="a" style="left:886px;top:746px;width:1px;height:19px;background:#808080"></div>
<div class="a" style="left:887px;top:746px;width:1px;height:19px;background:#fff"></div>
<div class="a" style="left:890px;top:744px;width:132px;height:22px;box-shadow:inset 1px 1px #808080,inset -1px -1px #fff"></div>

<div class="t" style="left:969px;top:751px">12:09 PM</div>


</body></html>
